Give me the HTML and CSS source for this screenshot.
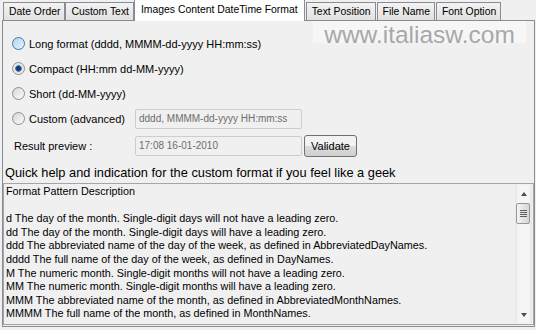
FILE: index.html
```html
<!DOCTYPE html>
<html lang="en">
<head>
    <meta charset="UTF-8">
    <title>Images Content DateTime Format</title>
    <link rel="stylesheet" href="styles.css">
</head>
<body>
    <div class="tabs">
        <div class="tab">Date Order</div>
        <div class="tab">Custom Text</div>
        <div class="tab active">Images Content DateTime Format</div>
        <div class="tab">Text Position</div>
        <div class="tab">File Name</div>
        <div class="tab">Font Option</div>
    </div>

    <div class="panel">
        <div class="watermark">www.italiasw.com</div>

        <div class="form">
            <label class="option wide"><span class="radio hot"></span>Long format (dddd, MMMM-dd-yyyy HH:mm:ss)</label>
            <label class="option wide"><span class="radio checked"></span>Compact (HH:mm dd-MM-yyyy)</label>
            <label class="option wide"><span class="radio"></span>Short (dd-MM-yyyy)</label>
            <label class="option"><span class="radio"></span>Custom (advanced)</label>
            <div class="field">dddd, MMMM-dd-yyyy HH:mm:ss</div>
            <div></div>
            <div class="preview-label">Result preview :</div>
            <div class="field preview">17:08 16-01-2010</div>
            <button class="validate">Validate</button>
        </div>

        <p class="hint">Quick help and indication for the custom format if you feel like a geek</p>

        <div class="help">
            <div class="help-text">
                <div class="line head">Format Pattern Description</div>
                <div class="line">d The day of the month. Single-digit days will not have a leading zero.</div>
                <div class="line">dd The day of the month. Single-digit days will have a leading zero.</div>
                <div class="line">ddd The abbreviated name of the day of the week, as defined in AbbreviatedDayNames.</div>
                <div class="line">dddd The full name of the day of the week, as defined in DayNames.</div>
                <div class="line">M The numeric month. Single-digit months will not have a leading zero.</div>
                <div class="line">MM The numeric month. Single-digit months will have a leading zero.</div>
                <div class="line">MMM The abbreviated name of the month, as defined in AbbreviatedMonthNames.</div>
                <div class="line">MMMM The full name of the month, as defined in MonthNames.</div>
            </div>
            <div class="scrollbar">
                <div class="arrow up"></div>
                <div class="thumb"><span></span><span></span><span></span><span></span></div>
                <div class="track"></div>
                <div class="arrow down"></div>
            </div>
        </div>
    </div>
</body>
</html>
```

FILE: styles.css
```css
body {
    margin: 0;
    width: 536px;
    height: 330px;
    overflow: hidden;
    background-color: #f0f0f0;
    font-family: "Liberation Sans", Arial, sans-serif;
    font-size: 11px;
    color: #000;
}
.tabs {
    display: flex;
    align-items: flex-end;
    height: 20px;
    padding-left: 3px;
    font-size: 10.4px;
}
.tab {
    height: 17px;
    line-height: 18px;
    padding: 0 4px 0 5px;
    border: 1px solid #898c95;
    border-bottom: none;
    background: linear-gradient(#f3f3f3, #e1e1e1);
    white-space: nowrap;
}
.tab.active ~ .tab {
    margin-left: 1px;
}
.tab.active {
    height: 21px;
    line-height: 19px;
    margin-bottom: -1px;
    padding: 0 6px;
    background: #fff;
    position: relative;
    z-index: 1;
}
.panel {
    position: relative;
    height: 305px;
    margin: 0 1px 0 2px;
    border: 1px solid #898c95;
    overflow: hidden;
}
.watermark {
    position: absolute;
    top: 0;
    left: 310px;
    width: 213px;
    height: 22px;
    text-align: center;
    font-size: 24.5px;
    line-height: 27px;
    color: #a8a8a8;
    background-color: #f6f6f6;
}
.form {
    display: grid;
    grid-template-columns: 121px 167px 53px;
    grid-auto-rows: 25px;
    column-gap: 2px;
    align-items: center;
    padding: 10px 0 0 9px;
}
.option {
    display: flex;
    align-items: center;
    gap: 4px;
    white-space: nowrap;
}
.option.wide {
    grid-column: 1 / -1;
}
.radio {
    width: 13px;
    height: 13px;
    box-sizing: border-box;
    border-radius: 50%;
    border: 1px solid #8e8f8f;
    background: linear-gradient(135deg, #d6d6d6, #fbfbfb);
}
.radio.hot {
    border-color: #3d7bad;
    background: linear-gradient(135deg, #aed6f2, #e8f4fc);
}
.radio.checked {
    background: radial-gradient(circle, #173d72 0 2px, #4f7fbb 3px, #dcdcdc 3.6px, #f6f6f6 6px);
}
.field {
    height: 20px;
    box-sizing: border-box;
    border: 1px solid #cdcdcd;
    border-radius: 2px;
    padding: 0 3px;
    line-height: 18px;
    font-size: 10px;
    color: #6d6d6d;
    background-color: #f0f0f0;
    white-space: nowrap;
    overflow: hidden;
}
.preview-label {
    padding-left: 2px;
    margin-top: 4px;
}
.preview {
    margin-top: 4px;
}
.validate {
    height: 22px;
    margin-top: 4px;
    padding: 0;
    border: 1px solid #707070;
    border-radius: 3px;
    background: linear-gradient(#f2f2f2 50%, #dcdcdc 50%, #d0d0d0);
    font-family: inherit;
    font-size: 11px;
    color: #000;
}
.hint {
    margin: 9px 0 0 2px;
    font-size: 12.8px;
    line-height: 15px;
    white-space: nowrap;
}
.help {
    display: flex;
    height: 142px;
    box-sizing: border-box;
    margin-top: 3px;
    border: 1px solid #a3a5aa;
    padding: 1px 1px 1px 0;
}
.help-text {
    flex: 1;
    padding: 0 0 0 2px;
    overflow: hidden;
    white-space: nowrap;
    font-size: 10.8px;
}
.line {
    line-height: 13.6px;
}
.line.head {
    margin-bottom: 13.6px;
}
.scrollbar {
    width: 17px;
    display: flex;
    flex-direction: column;
    background: linear-gradient(to right, #e6e6e6, #f5f5f5 20%, #f5f5f5 80%, #e6e6e6);
}
.arrow {
    height: 17px;
    display: flex;
    align-items: center;
    justify-content: center;
}
.arrow::before {
    content: "";
    border-left: 3px solid transparent;
    border-right: 3px solid transparent;
}
.arrow.up::before {
    border-bottom: 4px solid #4d4d4d;
}
.arrow.down::before {
    border-top: 4px solid #4d4d4d;
}
.thumb {
    height: 21px;
    margin: 1px 2px 0 1px;
    box-sizing: border-box;
    border: 1px solid #979797;
    border-radius: 2px;
    background: linear-gradient(to right, #f4f4f4, #e4e4e4 50%, #d6d6d6);
    display: flex;
    flex-direction: column;
    align-items: center;
    justify-content: center;
    gap: 1px;
}
.thumb span {
    width: 7px;
    height: 1px;
    background-color: #5f5f5f;
}
.track {
    flex: 1;
}
```
